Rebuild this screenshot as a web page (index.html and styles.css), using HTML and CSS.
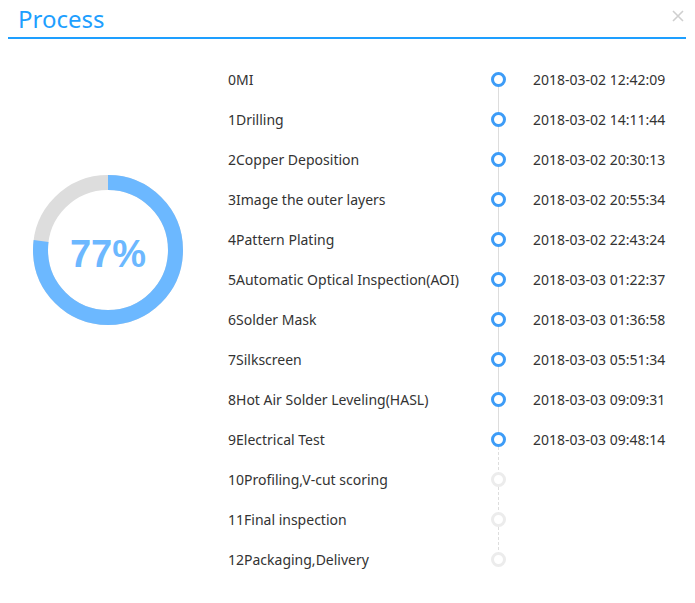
FILE: index.html
```html
<!DOCTYPE html>
<html>
<head>
<meta charset="utf-8">
<link rel="stylesheet" href="styles.css">
</head>
<body>
<div class="dialog">
  <div class="header">
    <h1 class="title">Process</h1>
    <svg class="close" width="12" height="12" viewBox="0 0 12 12"><path d="M1 1L11 11M11 1L1 11" stroke="#cfcfcf" stroke-width="1.6" fill="none"/></svg>
  </div>
  <div class="main">
    <div class="chart">
      <svg width="150" height="150" viewBox="0 0 150 150">
        <circle cx="75" cy="75" r="67.5" fill="none" stroke="#dddddd" stroke-width="15"/>
        <circle cx="75" cy="75" r="67.5" fill="none" stroke="#6cb8ff" stroke-width="15"
          stroke-dasharray="326.56 500" transform="rotate(-90 75 75)"/>
      </svg>
      <span class="pct">77%</span>
    </div>
    <ul class="steps">
      <li class="step done"><span class="name">0MI</span><span class="dot"></span><span class="time">2018-03-02 12:42:09</span></li>
      <li class="step done"><span class="name">1Drilling</span><span class="dot"></span><span class="time">2018-03-02 14:11:44</span></li>
      <li class="step done"><span class="name">2Copper Deposition</span><span class="dot"></span><span class="time">2018-03-02 20:30:13</span></li>
      <li class="step done"><span class="name">3Image the outer layers</span><span class="dot"></span><span class="time">2018-03-02 20:55:34</span></li>
      <li class="step done"><span class="name">4Pattern Plating</span><span class="dot"></span><span class="time">2018-03-02 22:43:24</span></li>
      <li class="step done"><span class="name">5Automatic Optical Inspection(AOI)</span><span class="dot"></span><span class="time">2018-03-03 01:22:37</span></li>
      <li class="step done"><span class="name">6Solder Mask</span><span class="dot"></span><span class="time">2018-03-03 01:36:58</span></li>
      <li class="step done"><span class="name">7Silkscreen</span><span class="dot"></span><span class="time">2018-03-03 05:51:34</span></li>
      <li class="step done"><span class="name">8Hot Air Solder Leveling(HASL)</span><span class="dot"></span><span class="time">2018-03-03 09:09:31</span></li>
      <li class="step done last-done"><span class="name">9Electrical Test</span><span class="dot"></span><span class="time">2018-03-03 09:48:14</span></li>
      <li class="step"><span class="name">10Profiling,V-cut scoring</span><span class="dot"></span><span class="time"></span></li>
      <li class="step"><span class="name">11Final inspection</span><span class="dot"></span><span class="time"></span></li>
      <li class="step last"><span class="name">12Packaging,Delivery</span><span class="dot"></span><span class="time"></span></li>
    </ul>
  </div>
</div>
</body>
</html>
```

FILE: styles.css
```css
html, body {
  margin: 0;
  padding: 0;
  background: #ffffff;
}
body {
  font-family: "Noto Sans", "Open Sans", sans-serif;
  color: #333333;
}
.dialog {
  width: 695px;
  height: 603px;
  padding: 0 9px 0 8px;
  box-sizing: border-box;
}
.header {
  position: relative;
  height: 37px;
  border-bottom: 2px solid #1e9fff;
  padding-left: 10px;
}
.title {
  margin: 0;
  font-weight: normal;
  font-size: 24px;
  line-height: 38px;
  color: #1e9fff;
  font-family: "Noto Sans", "Open Sans", sans-serif;
}
.close {
  position: absolute;
  right: 2px;
  top: 10px;
  display: block;
}
.main {
  display: flex;
}
.chart {
  position: relative;
  width: 150px;
  height: 150px;
  margin: 136px 45px 0 25px;
}
.chart svg {
  display: block;
}
.pct {
  position: absolute;
  left: 0;
  right: 0;
  top: 57px;
  text-align: center;
  font-family: "Liberation Sans", Arial, sans-serif;
  font-weight: bold;
  font-size: 38px;
  line-height: 44px;
  color: #6cb8ff;
}
.steps {
  list-style: none;
  margin: 0;
  padding: 20px 0 0 0;
}
.step {
  display: grid;
  grid-template-columns: 263px 15px 1fr;
  align-items: center;
  height: 40px;
  font-size: 14px;
  white-space: nowrap;
}
.time {
  padding-left: 27px;
}
.dot {
  position: relative;
  width: 15px;
  height: 15px;
  box-sizing: border-box;
  border-radius: 50%;
  border: 3px solid #ececec;
}
.done .dot {
  border: 3px solid #3d9cf7;
}
.dot::after {
  content: "";
  position: absolute;
  left: 50%;
  margin-left: -0.5px;
  top: 12px;
  height: 28px;
  border-left: 1px dashed #dddddd;
}
.done .dot::after {
  border-left: 1px solid #dddddd;
}
.last-done .dot::after {
  border-left: 1px dashed #dddddd;
}
.last .dot::after {
  display: none;
}
```
